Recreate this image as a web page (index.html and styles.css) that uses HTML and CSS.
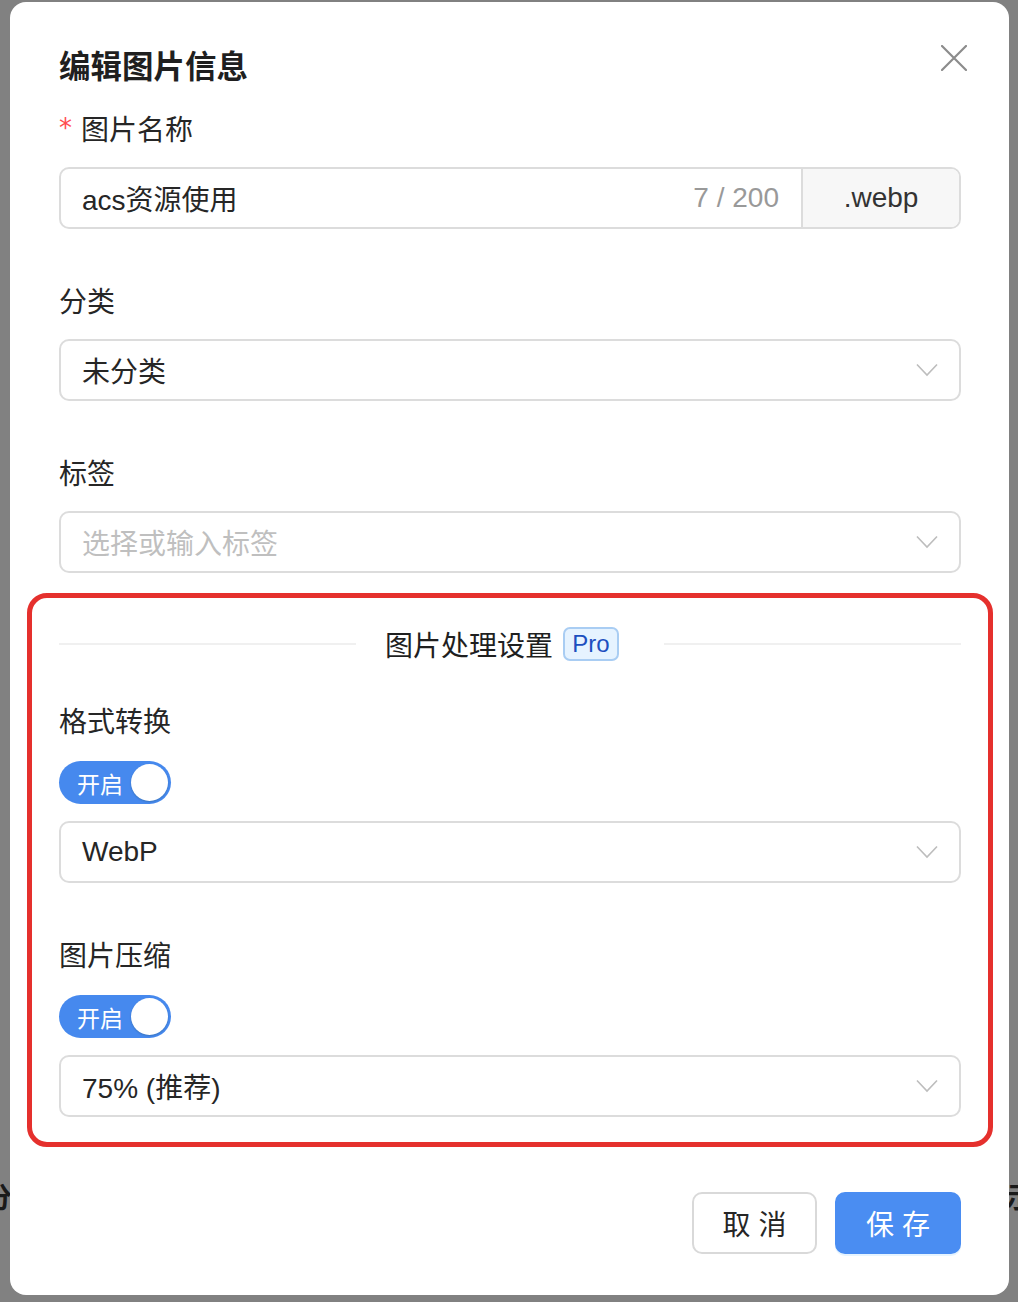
FILE: index.html
```html
<!DOCTYPE html>
<html lang="zh-CN">
<head>
<meta charset="utf-8">
<title>编辑图片信息</title>
<link rel="stylesheet" href="styles.css">
</head>
<body>
<div class="backdrop-text left">分</div>
<div class="backdrop-text right">示</div>
<div class="modal">
  <button class="close" aria-label="关闭">
    <svg width="26" height="26" viewBox="0 0 26 26"><path d="M1 1L25 25M25 1L1 25" stroke="#8c8c8c" stroke-width="2.2" fill="none" stroke-linecap="round"/></svg>
  </button>
  <h1 class="title">编辑图片信息</h1>

  <div class="item">
    <div class="label"><span class="req">*</span>图片名称</div>
    <div class="input-group">
      <div class="affix">
        <span class="value">acs资源使用</span>
        <span class="count">7 / 200</span>
      </div>
      <div class="addon">.webp</div>
    </div>
  </div>

  <div class="item">
    <div class="label">分类</div>
    <div class="select">
      <span class="value">未分类</span>
      <svg class="arrow" width="22" height="14" viewBox="0 0 22 14"><path d="M1 1.5L11 12L21 1.5" stroke="#bdbdbd" stroke-width="1.6" fill="none"/></svg>
    </div>
  </div>

  <div class="item last">
    <div class="label">标签</div>
    <div class="select">
      <span class="placeholder">选择或输入标签</span>
      <svg class="arrow" width="22" height="14" viewBox="0 0 22 14"><path d="M1 1.5L11 12L21 1.5" stroke="#bdbdbd" stroke-width="1.6" fill="none"/></svg>
    </div>
  </div>

  <div class="highlight">
    <div class="divider">
      <span class="line"></span>
      <span class="divider-text">图片处理设置<span class="pro">Pro</span></span>
      <span class="line"></span>
    </div>

    <div class="item">
      <div class="label">格式转换</div>
      <div class="switch"><span class="switch-text">开启</span><span class="knob"></span></div>
      <div class="select">
        <span class="value">WebP</span>
        <svg class="arrow" width="22" height="14" viewBox="0 0 22 14"><path d="M1 1.5L11 12L21 1.5" stroke="#bdbdbd" stroke-width="1.6" fill="none"/></svg>
      </div>
    </div>

    <div class="item last">
      <div class="label">图片压缩</div>
      <div class="switch"><span class="switch-text">开启</span><span class="knob"></span></div>
      <div class="select">
        <span class="value">75% (推荐)</span>
        <svg class="arrow" width="22" height="14" viewBox="0 0 22 14"><path d="M1 1.5L11 12L21 1.5" stroke="#bdbdbd" stroke-width="1.6" fill="none"/></svg>
      </div>
    </div>
  </div>

  <div class="footer">
    <button class="btn">取 消</button>
    <button class="btn primary">保 存</button>
  </div>
</div>
</body>
</html>
```

FILE: styles.css
```css
* { box-sizing: border-box; }
html, body { margin: 0; padding: 0; }
body {
  background: #818181;
  font-family: "Liberation Sans", "Noto Sans CJK SC", sans-serif;
  color: #262626;
  width: 1018px;
  height: 1302px;
  overflow: hidden;
  position: relative;
}
.backdrop-text {
  position: absolute;
  top: 1180px;
  font-size: 28px;
  line-height: 32px;
  font-weight: bold;
  color: #1a1a1a;
  font-family: "Noto Sans CJK SC", sans-serif;
}
.backdrop-text.left { left: -16px; }
.backdrop-text.right { left: 1006px; }

.modal {
  position: relative;
  margin: 2px 0 0 10px;
  width: 999px;
  background: #fff;
  border-radius: 16px;
  padding: 42px 48px 41px 49px;
}
.close {
  position: absolute;
  left: 931px;
  top: 43px;
  width: 26px;
  height: 26px;
  padding: 0;
  border: 0;
  background: none;
  display: flex;
}
.title {
  margin: 0 0 18px;
  font-size: 31.5px;
  line-height: 40px;
  height: 44px;
  font-weight: bold;
  color: #1f1f1f;
  font-family: "Noto Sans CJK SC", sans-serif;
}
.item { margin-bottom: 49px; }
.item.last { margin-bottom: 20px; }
.label {
  font-size: 28px;
  line-height: 38px;
  height: 44px;
  padding-top: 5px;
  margin-bottom: 17px;
  color: #262626;
  display: flex;
  align-items: center;
}
.req {
  color: #ff4d4f;
  font-family: "DejaVu Sans", sans-serif;
  font-size: 26px;
  width: 22px;
  line-height: 1;
  position: relative;
  top: -3px;
}
.input-group {
  display: flex;
  height: 62px;
  border: 2px solid #dcdcdc;
  border-radius: 10px;
  overflow: hidden;
  font-size: 28px;
}
.affix {
  flex: 1;
  display: flex;
  align-items: center;
  justify-content: space-between;
  padding: 0 22px 0 21px;
}
.value { color: #262626; }
.count { color: #999; }
.addon {
  width: 158px;
  border-left: 2px solid #dcdcdc;
  background: #f7f7f7;
  display: flex;
  align-items: center;
  justify-content: center;
  color: #333;
}
.select {
  height: 62px;
  border: 2px solid #dcdcdc;
  border-radius: 10px;
  display: flex;
  align-items: center;
  justify-content: space-between;
  padding: 0 21px 0 21px;
  font-size: 28px;
}
.placeholder { color: #bfbfbf; }
.arrow { display: block; }

.highlight {
  margin: 0 -32px;
  border: 5px solid #e5302d;
  border-radius: 20px;
  padding: 29px 27px 5px;
}
.highlight .label { margin-bottom: 19px; }
.highlight .item.last { margin-bottom: 20px; }
.divider {
  display: flex;
  align-items: center;
  height: 34px;
  margin-bottom: 37px;
}
.line {
  flex: 1;
  height: 2px;
  background: #f0f0f0;
}
.divider-text {
  display: flex;
  align-items: center;
  padding: 0 45px 0 29px;
  font-size: 28px;
  color: #1f1f1f;
}
.pro {
  margin-left: 10px;
  width: 56px;
  height: 34px;
  border: 2px solid #a9cdf3;
  background: #e6f3ff;
  border-radius: 7px;
  color: #1d4fbf;
  font-size: 24px;
  display: flex;
  align-items: center;
  justify-content: center;
}
.switch {
  width: 112px;
  height: 43px;
  border-radius: 22px;
  background: #4689ee;
  display: flex;
  align-items: center;
  justify-content: space-between;
  padding: 0 3px 0 18px;
  margin-bottom: 17px;
}
.switch-text {
  color: #fff;
  font-size: 23px;
  font-family: "Noto Sans CJK SC", sans-serif;
}
.knob {
  width: 37px;
  height: 37px;
  border-radius: 50%;
  background: #fff;
  box-shadow: 0 1px 2px rgba(0, 35, 11, 0.2);
}
.footer {
  display: flex;
  justify-content: flex-end;
  gap: 18px;
  margin-top: 45px;
}
.btn {
  width: 125px;
  height: 62px;
  border: 2px solid #d9d9d9;
  border-radius: 10px;
  background: #fff;
  font-family: "Liberation Sans", "Noto Sans CJK SC", sans-serif;
  font-size: 28px;
  color: #262626;
  padding: 0;
}
.btn.primary {
  width: 126px;
  background: #4a8df2;
  border-color: #4a8df2;
  color: #fff;
  box-shadow: 0 2px 0 rgba(5, 145, 255, 0.1);
}
```
